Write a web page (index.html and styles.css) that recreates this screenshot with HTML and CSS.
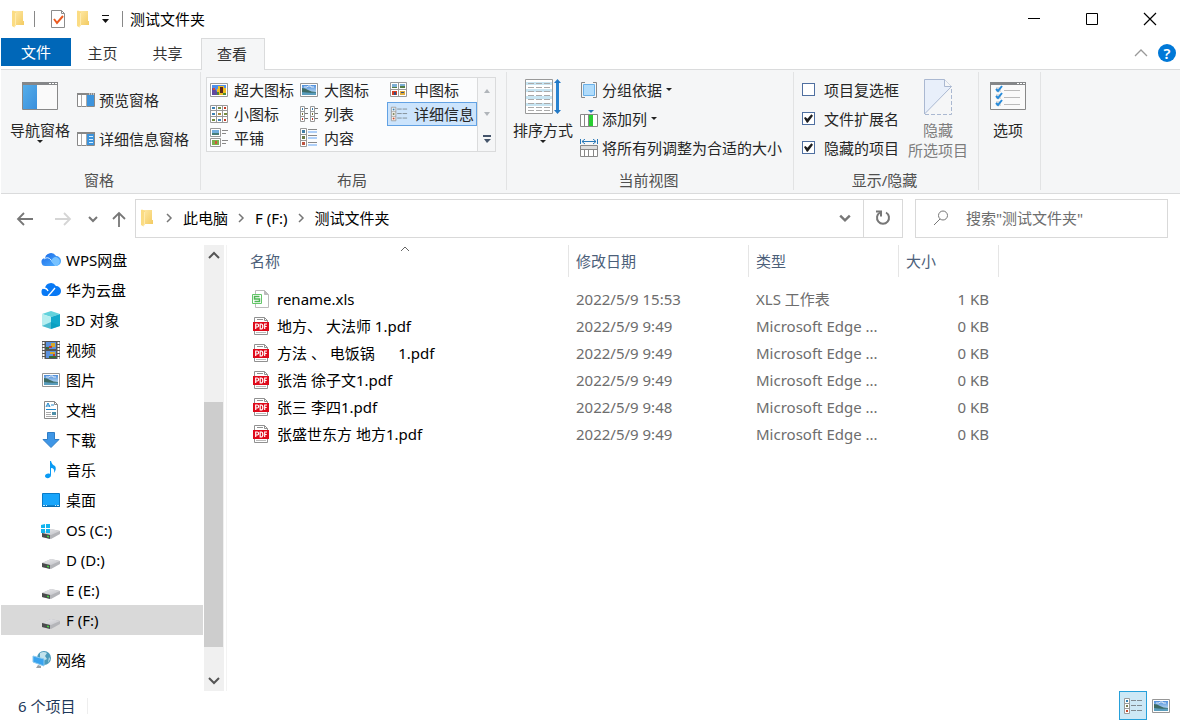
FILE: index.html
```html
<!DOCTYPE html>
<html lang="zh-CN">
<head>
    <meta charset="UTF-8">
    <meta name="viewport" content="width=device-width, initial-scale=1.0">
    <title>测试文件夹</title>
    <link rel="stylesheet" href="styles.css">
</head>
<body>

<!-- Shared icons -->
<svg class="sprite" aria-hidden="true">
    <linearGradient id="sky" x1="0" y1="0" x2="0" y2="1">
        <stop offset="0" stop-color="#4f8fdc"/>
        <stop offset="1" stop-color="#d5ecf7"/>
    </linearGradient>
    <linearGradient id="cloudFill" x1="0" y1="0" x2="1" y2="1">
        <stop offset="0" stop-color="#1668e8"/>
        <stop offset="1" stop-color="#55b4ff"/>
    </linearGradient>
    <linearGradient id="gold" x1="0" y1="0" x2="1" y2="1">
        <stop offset="0" stop-color="#ffe9a6"/>
        <stop offset="1" stop-color="#f3cb62"/>
    </linearGradient>
    <linearGradient id="blueFill" x1="0" y1="0" x2="1" y2="1">
        <stop offset="0" stop-color="#55aeea"/>
        <stop offset="1" stop-color="#3a8fdc"/>
    </linearGradient>
    <linearGradient id="driveTop" x1="0" y1="0" x2="1" y2="1">
        <stop offset="0" stop-color="#e9e9ec"/>
        <stop offset="1" stop-color="#c3c4c8"/>
    </linearGradient>
    <symbol id="folder" viewBox="0 0 14 18">
        <path d="M3 1h9v10h1v4H3z" fill="url(#gold)"/>
        <path d="M1 1l1-.5 3 1.500V15l-1.500 2.500L1 16z" fill="#fbdc83"/>
        <path d="M4.500 3v12l-1.500 2" stroke="#ffebae" fill="none"/>
    </symbol>
    <symbol id="photo" viewBox="0 0 18 14">
        <path d="M.5.5h17v13H.5z" fill="#fff" stroke="#969696"/>
        <path d="M2 2h14v10H2z" fill="url(#sky)"/>
        <path d="M2 5q3 0 6 2t8 2v1H2z" fill="#3d6b65"/>
        <path d="M2 9q6 1 14 .5V12H2z" fill="#5a9dbd"/>
        <path d="M4 4h3l1-1h3v1h3" stroke="#fff" fill="none" opacity=".8"/>
    </symbol>
    <symbol id="details" viewBox="0 0 20 20">
        <path d="M1.500 2.500h5v15h-5zM1.500 7.500h5M1.500 12.500h5" fill="#fff" stroke="#9b9b9b"/>
        <path d="M3 4h2v2H3z" fill="#367eb0"/>
        <path d="M3 9h2v2H3z" fill="#7a7f55"/>
        <path d="M3 14h2v2H3z" fill="#c64a2d"/>
        <path d="M8 4.500h5m1 0h5M8 9.500h5m1 0h5M8 14.500h5m1 0h5" stroke="#7f8a91"/>
    </symbol>
    <symbol id="drive" viewBox="0 0 20 20">
        <path d="M1 11l9-4 9 2v3l-9 5-9-2z" fill="#b4b5b9"/>
        <path d="M1 11l9-4 9 2-9 4z" fill="url(#driveTop)"/>
        <path d="M1 11l8 2v4l-8-2z" fill="#4a4b4d"/>
        <path d="M6 13.500l2 .5v1.500L6 15z" fill="#40d33d"/>
    </symbol>
    <symbol id="pdf" viewBox="0 0 18 20">
        <path d="M2.500 1.500h10l3 3v14h-13z" fill="#fff" stroke="#919191"/>
        <path d="M12.500 1.500v3h3M5 3.500h6" fill="none" stroke="#919191"/>
        <path d="M4 16.500h10" stroke="#bbb"/>
        <path d="M1 6h16v9H1z" fill="#df0a1b"/>
        <path d="M3.700 13V8h1.500q1.400 0 1.400 1.500T5.200 11H3.700M8.200 8v5h.9q1.700 0 1.700-2.500T9.100 8zM12.700 13V8H15m-2.300 2.500h2" fill="none" stroke="#fff" stroke-width="1.200"/>
    </symbol>
    <symbol id="chevronDown" viewBox="0 0 10 10">
        <path d="M1 3l4 4 4-4" fill="none" stroke="currentColor" stroke-width="2"/>
    </symbol>
    <symbol id="chevronRight" viewBox="0 0 10 10">
        <path d="M3 1l4 4-4 4" fill="none" stroke="#777" stroke-width="1.500"/>
    </symbol>
</svg>

<div class="window">

    <!-- Title bar -->
    <header class="titlebar">
        <svg class="folder-icon"><use href="#folder"/></svg>
        <span class="divider first"></span>
        <button class="plain" aria-label="属性">
            <svg width="16" height="20"><path d="M1.500 1.500h10l3 3v14h-13z" fill="#fff" stroke="#8c8c8c"/><path d="M11.500 1.500v3h3" fill="none" stroke="#8c8c8c"/><path d="M4 10l3 4 6-7" fill="none" stroke="#eb5a20" stroke-width="2"/></svg>
        </button>
        <button class="plain new-folder" aria-label="新建文件夹"><svg class="folder-icon"><use href="#folder"/></svg></button>
        <button class="plain" aria-label="自定义快速访问工具栏">
            <svg width="8" height="8"><path d="M0 0h7v1H0zM0 4h7L3.500 8z" fill="#111"/></svg>
        </button>
        <span class="divider last"></span>
        <h1>测试文件夹</h1>
        <div class="window-buttons">
            <button aria-label="最小化"><svg width="14" height="14"><path d="M1 6.500h12" stroke="#000"/></svg></button>
            <button aria-label="最大化"><svg width="14" height="14"><path d="M1.500 1.500h11v11h-11z" fill="none" stroke="#000"/></svg></button>
            <button aria-label="关闭"><svg width="14" height="14"><path d="M1 1l12 12M13 1L1 13" stroke="#000" stroke-width="1.200"/></svg></button>
        </div>
    </header>

    <!-- Ribbon tabs -->
    <nav class="tabs">
        <button class="tab file">文件</button>
        <button class="tab">主页</button>
        <button class="tab">共享</button>
        <button class="tab active">查看</button>
        <div class="tab-tools">
            <button class="plain" aria-label="最小化功能区"><svg width="14" height="8"><path d="M1 7l6-6 6 6" fill="none" stroke="#999" stroke-width="1.300"/></svg></button>
            <button class="help" aria-label="帮助">?</button>
        </div>
    </nav>

    <!-- Ribbon -->
    <section class="ribbon">
        <div class="group panes">
            <div class="group-body">
                <button class="big">
                    <svg width="36" height="34"><path d="M.5 3.500h35v27H.5z" fill="#fafafa" stroke="#888"/><path d="M0 3h36v3H0z" fill="#858789"/><path d="M27 4h2v1h-2zm3 0h2v1h-2zm3 0h2v1h-2z" fill="#fff"/><path d="M1 6h14v24H1z" fill="url(#blueFill)"/></svg>
                    <span>导航窗格</span>
                    <i class="caret"></i>
                </button>
                <div class="stack wide">
                    <button class="small"><svg width="18" height="14"><path d="M.5.5h17v13H.5z" fill="#fff" stroke="#888"/><path d="M0 0h18v2H0z" fill="#888"/><path d="M4.500 2v12M9.500 2v12" stroke="#aaa"/><path d="M10 2h7v11h-7z" fill="#3d94dd"/><path d="M12 1h1m1 0h1m1 0h1" stroke="#fff"/></svg>预览窗格</button>
                    <button class="small"><svg width="18" height="14"><path d="M.5.5h17v13H.5z" fill="#fff" stroke="#888"/><path d="M0 0h18v2H0z" fill="#888"/><path d="M4.500 2v12M9.500 2v12" stroke="#aaa"/><path d="M10 2h7v11h-7z" fill="#3d94dd"/><path d="M12 4.500h4m-4 3h4m-4 3h4" stroke="#d9f0ff"/></svg>详细信息窗格</button>
                </div>
            </div>
            <div class="group-label">窗格</div>
        </div>

        <div class="group layout">
            <div class="group-body">
                <div class="gallery">
                    <div class="gallery-items">
                        <button><svg width="18" height="20"><path d="M.5 3.500h17v13H.5z" fill="#fff" stroke="#999"/><path d="M2 5h14v10H2z" fill="#4d8eea"/><path d="M2 12h14v3H2z" fill="#4d8a35"/><path d="M2 8l3 1 2 3v3H2z" fill="#60499c"/><path d="M3 8h2v2H3z" fill="#e14b31"/><path d="M8 6h6v2h2v5h-3v2H9v-3H7V9h1z" fill="#f0bd20"/><path d="M10 7h3v6h-3z" fill="#59251b"/></svg>超大图标</button>
                        <button><svg width="18" height="20"><use href="#photo" y="3" width="18" height="14"/></svg>大图标</button>
                        <button><svg width="18" height="20"><path d="M.5 2.500h16v14H.500zM8.500 2v15M0 9.500h17" fill="#fff" stroke="#999"/><path d="M2 4h5v4H2zm8 0h5v4h-5z" fill="#7eafd5"/><path d="M2 7h5v1H2zm8-1h5v2h-5z" fill="#527d45"/><path d="M2 11h5v4H2z" fill="#d63d21"/><path d="M10 11h5v4h-5z" fill="#dfac3d"/><path d="M4 12h2v3H4zm7 0h3v1h-3z" fill="#354f83"/></svg>中图标</button>
                        <button><svg width="18" height="20"><path d="M.5 1.500h17v17H.500zM6.500 1v18M12.500 1v18M0 6.500h18M0 12.500h18" fill="#fff" stroke="#999"/><path d="M2 3h3v2H2zm0 6h3v2H2zm6 6h3v2H8z" fill="#3e83b5"/><path d="M8 3h3v2H8zm6 6h3v2h-3zM2 15h3v2H2z" fill="#748d3f"/><path d="M14 3h2v2h-2zm0 12h2v2h-2z" fill="#c13824"/><path d="M8 9h3v2H8z" fill="#a98a36"/></svg>小图标</button>
                        <button><svg width="18" height="20"><path d="M.5 2.500h4v15h-4zM.5 7.500h4m-4 5h4M10.500 2.500h4v15h-4zm0 5h4m-4 5h4" fill="#fff" stroke="#999"/><path d="M5 4.500h3m-3 5h3m-3 5h3m7-10h3m-3 5h3m-3 5h3" stroke="#777"/><path d="M2 4h1v2H2zm10 0h1v2h-1z" fill="#367eb0"/><path d="M2 9h1v2H2zm10 0h1v2h-1z" fill="#776f35"/><path d="M2 14h1v2H2zm10 0h1v2h-1z" fill="#c33523"/></svg>列表</button>
                        <button class="selected"><svg width="18" height="18"><use href="#details"/></svg>详细信息</button>
                        <button><svg width="18" height="20"><path d="M.5.500h10v8H.500zm0 10h10v8H.500z" fill="#fff" stroke="#999"/><path d="M2 2h7v5H2z" fill="#73addc"/><path d="M2 5h7v2H2z" fill="#457b77"/><path d="M2 12h7v5H2z" fill="#79b14d"/><path d="M5 13h2v3H5z" fill="#cf5737"/><path d="M12 2.500h6m-6 3h4m-4 7h6m-6 3h4" stroke="#888"/></svg>平铺</button>
                        <button><svg width="18" height="20"><path d="M.5.500h6v18h-6zm0 6h6m-6 6h6" fill="#fff" stroke="#999"/><path d="M2 2h3v3H2z" fill="#417da5"/><path d="M2 8h3v3H2z" fill="#6c7a45"/><path d="M2 14h3v3H2z" fill="#bd5440"/><path d="M8 1.500h9m-9 6h9m-9 7h9" stroke="#888"/><path d="M8 4h9m-9 6h9m-9 7h9" stroke="#62a3f4"/></svg>内容</button>
                    </div>
                    <div class="gallery-scroll">
                        <button aria-label="上一行"><svg width="8" height="5"><path d="M1 5l3-4 3 4z" fill="#b0b5ba"/></svg></button>
                        <button aria-label="下一行"><svg width="8" height="5"><path d="M1 0h6L4 4z" fill="#b0b5ba"/></svg></button>
                        <button aria-label="更多"><svg width="8" height="8"><path d="M0 0h8v2H0zM1 4h7L4 8z" fill="#44546a"/></svg></button>
                    </div>
                </div>
            </div>
            <div class="group-label">布局</div>
        </div>

        <div class="group current-view">
            <div class="group-body">
                <button class="big">
                    <svg width="36" height="36"><path d="M.5.500h27v34H.500z" fill="#fff" stroke="#999"/><path d="M1 3h26v3H1zm0 7h26v3H1zm0 7h26v3H1zm0 7h26v3H1z" fill="#c8e5f2"/><path d="M3 4.500h22m-22 4h22m-22 4h22m-22 4h22m-22 4h22m-22 4h22m-22 4h22m-22 3h22" stroke="#aaa" stroke-dasharray="6 2"/><path d="M32.500 2v31" stroke="#2782d0" stroke-width="3"/><path d="M29 4l3.500-4L36 4zm0 27l3.500 4 3.500-4z" fill="#2278c4"/></svg>
                    <span>排序方式</span>
                    <i class="caret"></i>
                </button>
                <div class="stack">
                    <button class="small"><svg width="18" height="18"><path d="M5 1.500H1.500v15H5m8-15h3.500v15H13" fill="none" stroke="#888"/><path d="M3.500 3.500h11v11h-11z" fill="#b1dcfb" stroke="#6ab1e9"/></svg>分组依据<i class="caret"></i></button>
                    <button class="small"><svg width="18" height="18"><path d="M.5 4.500h17v12H.500zm4 0v12M8.500 4v12m4-12v12" fill="#fff" stroke="#888"/><path d="M9 5h4v11H9z" fill="#28cf32"/><path d="M8 0h6l-3 3z" fill="#2878b8"/></svg>添加列<i class="caret"></i></button>
                    <button class="small"><svg width="18" height="18"><path d="M.500 0v5m17-5v5M2 2.500h14M5 0L2 2.500 5 5m8-5l3 2.500L13 5" fill="none" stroke="#2878b8"/><path d="M.500 6.500h17v11H.500zM4.500 11v6m4-6v6m5-6v6" fill="#fff" stroke="#888"/><path d="M1 7h16v4H1z" fill="#ddd"/><path d="M1 10.500h16" stroke="#888"/></svg>将所有列调整为合适的大小</button>
                </div>
            </div>
            <div class="group-label">当前视图</div>
        </div>

        <div class="group show-hide">
            <div class="group-body">
                <div class="checks">
                    <label><input type="checkbox">项目复选框</label>
                    <label><input type="checkbox" checked>文件扩展名</label>
                    <label><input type="checkbox" checked>隐藏的项目</label>
                </div>
                <button class="big" disabled>
                    <svg width="28" height="36"><path d="M.5 35V.500h20l7 7z" fill="#e8effa" stroke="#aab8d1"/><path d="M20.500.500v7h7" fill="#f5f6f7" stroke="#aab8d1"/><path d="M27.500 10v25.500H.500" fill="none" stroke="#aab8d1" stroke-dasharray="4 2"/></svg>
                    <span>隐藏</span>
                    <span>所选项目</span>
                </button>
            </div>
            <div class="group-label">显示/隐藏</div>
        </div>

        <div class="group options">
            <div class="group-body">
                <button class="big">
                    <svg width="36" height="34"><path d="M.5 3.500h35v27H.500z" fill="#fafafa" stroke="#888"/><path d="M0 3h36v3H0z" fill="#858789"/><path d="M27 4h2v1h-2zm3 0h2v1h-2zm3 0h2v1h-2z" fill="#fff"/><path d="M6 8h5v5H6zm0 7h5v5H6zm0 7h5v5H6z" fill="#ddd"/><path d="M6 10l2 2 4-5M6 17l2 2 4-5M6 24l2 2 4-5" fill="none" stroke="#278bda" stroke-width="2"/><path d="M14 11.500h16m-16 7h16m-16 7h16" stroke="#bbb"/></svg>
                    <span>选项</span>
                </button>
            </div>
        </div>
    </section>

    <!-- Navigation and address bar -->
    <div class="navbar">
        <div class="nav-buttons">
            <button class="plain" aria-label="后退"><svg width="18" height="16"><path d="M17 8H2m6-6L2 8l6 6" fill="none" stroke="#777" stroke-width="1.800"/></svg></button>
            <button class="plain forward" aria-label="前进"><svg width="18" height="16"><path d="M1 8h15m-6-6l6 6-6 6" fill="none" stroke="#d5d5d5" stroke-width="1.800"/></svg></button>
            <button class="plain recent" aria-label="最近浏览的位置"><svg width="10" height="10"><use href="#chevronDown"/></svg></button>
            <button class="plain" aria-label="向上"><svg width="14" height="18"><path d="M7 17V3M1 9l6-6 6 6" fill="none" stroke="#777" stroke-width="1.800"/></svg></button>
        </div>
        <div class="address">
            <svg class="folder-icon"><use href="#folder"/></svg>
            <svg class="crumb-arrow"><use href="#chevronRight"/></svg>
            <a href="#">此电脑</a>
            <svg class="crumb-arrow"><use href="#chevronRight"/></svg>
            <a href="#">F (F:)</a>
            <svg class="crumb-arrow"><use href="#chevronRight"/></svg>
            <a href="#">测试文件夹</a>
            <button class="plain history" aria-label="以前的位置"><svg width="12" height="12"><use href="#chevronDown"/></svg></button>
            <button class="refresh" aria-label="刷新"><svg width="16" height="16"><path d="M11 2.500a6 6 0 1 1-6 0" fill="none" stroke="#777" stroke-width="2"/><path d="M1 1.500h5v5" fill="none" stroke="#777" stroke-width="2"/></svg></button>
        </div>
        <label class="search">
            <svg width="18" height="18"><circle cx="11" cy="6.500" r="4.500" fill="none" stroke="#777"/><path d="M8 10l-6 6" stroke="#777"/></svg>
            <input type="text" aria-label="搜索" placeholder='搜索"测试文件夹"'>
        </label>
    </div>

    <main class="content">
        <!-- Folder tree -->
        <nav class="tree">
            <ul>
                <li><a href="#"><svg viewBox="0 0 20 20"><path d="M5 16a4 4 0 0 1-1-8 6 6 0 0 1 11-2 5 5 0 0 1 0 10z" fill="url(#cloudFill)"/><path d="M3 9q4-3 7 1l5 6" fill="none" stroke="#d7eeff"/><path d="M10 11q3-6 7-3 3 2 1 6-1 2-4 2z" fill="#77c2ff"/></svg>WPS网盘</a></li>
                <li><a href="#"><svg viewBox="0 0 20 20"><path d="M5 16a4 4 0 0 1-1-8 6 6 0 0 1 11-2 5 5 0 0 1 0 10z" fill="#0879f5"/><path d="M2 8q4 0 5 3M7 16q3-3 7-8" fill="none" stroke="#fff" stroke-width="1.300"/></svg>华为云盘</a></li>
                <li><a href="#"><svg viewBox="0 0 20 20"><path d="M1 4l9-3 9 3-9 3z" fill="#62d2dc"/><path d="M1 4l9 3v12l-9-3z" fill="#b5eef0"/><path d="M10 7l9-3v12l-9 3z" fill="#12a9cb"/><path d="M1 16l9-4 9 4-9 3z" fill="#079bbb" opacity=".6"/></svg>3D 对象</a></li>
                <li><a href="#"><svg viewBox="0 0 20 20"><path d="M1 1h18v18H1z" fill="#555"/><path d="M2.500 2v17m15-17v17" stroke="#fff" stroke-width="2" stroke-dasharray="2 1"/><path d="M5 2h10v7H5zm0 9h10v7H5z" fill="#5b91de"/><path d="M10 3h4v4h-4zm-1 9h5v2H9z" fill="#d4a92b"/><path d="M8 6h3v2H8zm4 8h2v2h-2z" fill="#c73f2b"/><path d="M5 7h3v2H5zm3 9h7v2H8z" fill="#386b37"/></svg>视频</a></li>
                <li><a href="#"><svg viewBox="0 0 20 20"><use href="#photo" x="1" y="3" width="18" height="14"/></svg>图片</a></li>
                <li><a href="#"><svg viewBox="0 0 20 20"><path d="M3.500 1.500h10l3 3v14h-13z" fill="#fff" stroke="#888"/><path d="M13.500 1.500v3h3" fill="none" stroke="#888"/><path d="M5 7l2-4 2 4M6 6h3m1-1h3M5 9.500h10m-4 3h4" fill="none" stroke="#2188cd"/><path d="M5 12.500h5m-5 2h5m-5 2h10" stroke="#aaa"/><path d="M11 12h4v3h-4z" fill="#4f8fa8"/></svg>文档</a></li>
                <li><a href="#"><svg viewBox="0 0 20 20"><path d="M6.500 2.500h7v7H18l-8 8-8-8h4.500z" fill="#3e96e6" stroke="#2f7dc6"/></svg>下载</a></li>
                <li><a href="#"><svg viewBox="0 0 20 20"><path d="M9 1h1q1 4 4 5 2 3-1 7 1-5-3-5v7c0 4-6 4-6 1 0-2 3-3 5-2z" fill="#0a9bf4"/></svg>音乐</a></li>
                <li><a href="#"><svg viewBox="0 0 20 20"><path d="M1.500 3.500h17v13h-17z" fill="#18a5fb" stroke="#087bc8"/><path d="M1 16h18" stroke="#075f9b"/><path d="M2 15.500h2m1 0h1m8 0h1m1 0h2" stroke="#c8edff"/></svg>桌面</a></li>
                <li><a href="#"><svg viewBox="0 0 20 20"><use href="#drive" y="2" width="20" height="20"/><path d="M0 5l4-1v4H0zm5-1h4v4H5zM0 9h4v4H0zm5 0h4v4H5z" fill="#14b5ef"/></svg>OS (C:)</a></li>
                <li><a href="#"><svg viewBox="0 0 20 20"><use href="#drive" y="2" width="20" height="20"/></svg>D (D:)</a></li>
                <li><a href="#"><svg viewBox="0 0 20 20"><use href="#drive" y="2" width="20" height="20"/></svg>E (E:)</a></li>
                <li><a href="#" class="current"><svg viewBox="0 0 20 20"><use href="#drive" y="2" width="20" height="20"/></svg>F (F:)</a></li>
                <li class="root"><a href="#"><svg viewBox="0 0 20 20"><circle cx="13" cy="8" r="7" fill="#4c9bbb"/><path d="M9 3q4-2 7 0l-2 3 2 3-4 2-3-3zM18 7l1 2-2 4z" fill="#c2e2ec"/><path d="M2 6l11 3v7L2 12z" fill="#39a3ef" stroke="#88c9f0"/><path d="M7 15l3 1v2H5z" fill="#9aa2a8"/></svg>网络</a></li>
            </ul>
            <div class="scrollbar">
                <button aria-label="向上滚动"><svg width="12" height="8"><path d="M1 7l5-5 5 5" fill="none" stroke="#555" stroke-width="2"/></svg></button>
                <div class="track-before"></div>
                <div class="thumb"></div>
                <div class="track-after"></div>
                <button aria-label="向下滚动"><svg width="12" height="8"><path d="M1 1l5 5 5-5" fill="none" stroke="#555" stroke-width="2"/></svg></button>
            </div>
        </nav>

        <!-- File list -->
        <section class="files">
            <table>
                <colgroup>
                    <col class="col-name">
                    <col class="col-date">
                    <col class="col-type">
                    <col class="col-size">
                </colgroup>
                <thead>
                    <tr>
                        <th>名称<svg class="sort-mark" width="10" height="6"><path d="M1 5l4-4 4 4" fill="none" stroke="#666"/></svg></th>
                        <th>修改日期</th>
                        <th>类型</th>
                        <th>大小</th>
                    </tr>
                </thead>
                <tbody>
                    <tr>
                        <td><span class="file-name"><svg><path d="M3.500 1.500h9l4 4v13h-13z" fill="#fff" stroke="#bbb"/><path d="M12.500 1.500v4h4" fill="#bbb" stroke="#bbb"/><path d="M.5 5.500h9v9h-9z" fill="#fff" stroke="#65c66a"/><path d="M7.500 7.500h-5v2.500h5v2.500h-5" fill="none" stroke="#4db653" stroke-width="1.500"/></svg>rename.xls</span></td>
                        <td>2022/5/9 15:53</td>
                        <td>XLS 工作表</td>
                        <td>1 KB</td>
                    </tr>
                    <tr>
                        <td><span class="file-name"><svg><use href="#pdf"/></svg>地方、 大法师 1.pdf</span></td>
                        <td>2022/5/9 9:49</td>
                        <td>Microsoft Edge ...</td>
                        <td>0 KB</td>
                    </tr>
                    <tr>
                        <td><span class="file-name"><svg><use href="#pdf"/></svg>方法 、 电饭锅      1.pdf</span></td>
                        <td>2022/5/9 9:49</td>
                        <td>Microsoft Edge ...</td>
                        <td>0 KB</td>
                    </tr>
                    <tr>
                        <td><span class="file-name"><svg><use href="#pdf"/></svg>张浩 徐子文1.pdf</span></td>
                        <td>2022/5/9 9:49</td>
                        <td>Microsoft Edge ...</td>
                        <td>0 KB</td>
                    </tr>
                    <tr>
                        <td><span class="file-name"><svg><use href="#pdf"/></svg>张三 李四1.pdf</span></td>
                        <td>2022/5/9 9:48</td>
                        <td>Microsoft Edge ...</td>
                        <td>0 KB</td>
                    </tr>
                    <tr>
                        <td><span class="file-name"><svg><use href="#pdf"/></svg>张盛世东方 地方1.pdf</span></td>
                        <td>2022/5/9 9:49</td>
                        <td>Microsoft Edge ...</td>
                        <td>0 KB</td>
                    </tr>
                </tbody>
            </table>
        </section>
    </main>

    <!-- Status bar -->
    <footer class="statusbar">
        <span class="count">6 个项目</span>
        <div class="view-buttons">
            <button class="on" aria-label="详细信息视图"><svg width="20" height="20"><use href="#details"/></svg></button>
            <button aria-label="大缩略图视图"><svg width="18" height="14"><use href="#photo"/></svg></button>
        </div>
    </footer>
</div>

</body>
</html>
```
FILE: styles.css
```css
* {
    box-sizing: border-box;
}

body {
    margin: 0;
    background: #fff;
    color: #000;
    font-family: "Noto Sans", "Noto Sans CJK SC", sans-serif;
    font-size: 15px;
    line-height: 20px;
}

button,
input {
    font: inherit;
    color: inherit;
    padding: 0;
    margin: 0;
    border: none;
    background: none;
}

a {
    color: inherit;
    text-decoration: none;
}

svg {
    display: block;
    flex: none;
}

.sprite {
    position: absolute;
    width: 0;
    height: 0;
}

.window {
    display: flex;
    flex-direction: column;
    min-height: 100vh;
    padding: 0 1px;
}

.plain {
    display: flex;
    align-items: center;
    justify-content: center;
}

.folder-icon {
    width: 14px;
    height: 18px;
}

.caret {
    border: 3px solid transparent;
    border-top-color: #222;
    border-bottom: none;
}

/* Title bar */
.titlebar {
    display: flex;
    align-items: center;
    height: 38px;
    padding-left: 10px;
}

.titlebar h1 {
    margin: 0;
    font-size: 15px;
    font-weight: 400;
}

.divider {
    width: 1px;
    height: 16px;
    background: #888;
}

.divider.first {
    margin: 0 15px 0 9px;
}

.divider.last {
    margin: 0 7px 0 12px;
}

.new-folder {
    margin: 0 12px 0 10px;
}

.window-buttons {
    display: flex;
    margin-left: auto;
    padding-right: 1px;
}

.window-buttons button {
    display: flex;
    align-items: center;
    justify-content: center;
    width: 58px;
    height: 38px;
}

/* Ribbon tabs */
.tabs {
    display: flex;
    height: 32px;
    border-bottom: 1px solid #dadbdc;
}

.tab {
    width: 65px;
    height: 31px;
    padding: 0 2px 2px 0;
    color: #333;
}

.tab.file {
    width: 70px;
    height: 28px;
    padding: 0;
    background: #0067b8;
    color: #fff;
}

.tab.active {
    width: 64px;
    height: 32px;
    border: 1px solid #dadbdc;
    border-bottom: none;
    background: #f5f6f7;
}

.tab-tools {
    display: flex;
    align-items: center;
    gap: 10px;
    margin-left: auto;
    padding: 0 4px 2px 0;
}

.help {
    width: 18px;
    height: 18px;
    border-radius: 50%;
    background: #0078d7;
    color: #fff;
    font-weight: 600;
    line-height: 18px;
}

/* Ribbon */
.ribbon {
    display: flex;
    height: 124px;
    padding: 2px 0 3px;
    border-bottom: 1px solid #dadbdc;
    background: #f5f6f7;
    color: #262626;
}

.group {
    display: flex;
    flex-direction: column;
    border-right: 1px solid #e2e3e4;
    white-space: nowrap;
}

.group-body {
    display: flex;
    flex: 1;
    padding: 3px 0 0 5px;
}

.group-label {
    padding-right: 3px;
    color: #505050;
    text-align: center;
}

.panes {
    width: 200px;
}

.panes .group-body {
    gap: 7px;
    padding-left: 9px;
}

.layout {
    width: 306px;
}

.current-view {
    width: 287px;
}

.current-view .group-body {
    gap: 7px;
    padding-left: 6px;
}

.show-hide {
    width: 185px;
}

.show-hide .group-body {
    gap: 9px;
    padding-left: 8px;
}

.options {
    width: 62px;
}

.big {
    display: flex;
    flex-direction: column;
    align-items: center;
    justify-content: flex-start;
    min-width: 60px;
    padding-top: 4px;
}

.big svg {
    height: 41px;
}

.big:disabled {
    color: #7d7d7d;
}

.options .big {
    min-width: 48px;
}

.stack {
    display: flex;
    flex-direction: column;
}

.small {
    display: flex;
    align-items: center;
    gap: 4px;
    height: 29px;
}

.wide {
    padding-top: 5px;
}

.wide .small {
    height: 39px;
}

.checks label {
    display: flex;
    align-items: center;
    gap: 9px;
    height: 29px;
}

.checks input {
    display: grid;
    place-items: center;
    appearance: none;
    width: 13px;
    height: 13px;
    border: 1px solid #4f6fa0;
    background: #fff;
}

.checks input:checked::after {
    content: "";
    width: 9px;
    height: 9px;
    background: #1e1e1e;
    clip-path: polygon(0 45%, 16% 32%, 38% 54%, 82% 4%, 100% 20%, 42% 96%, 32% 96%);
}

/* Layout gallery */
.gallery {
    display: flex;
    height: 75px;
    margin-top: 2px;
    border: 1px solid #dadbdc;
    background: #fbfcfd;
}

.gallery-items {
    display: grid;
    grid-template-columns: repeat(3, 90px);
    grid-template-rows: repeat(3, 24px);
}

.gallery-items button {
    display: flex;
    align-items: center;
    gap: 6px;
    padding-left: 3px;
}

.gallery-items .selected {
    padding-left: 2px;
    border: 1px solid #62a2e4;
    background: #cce4fc;
}

.gallery-scroll {
    display: flex;
    flex-direction: column;
    width: 18px;
    border-left: 1px solid #dadbdc;
    background: #f5f6f7;
}

.gallery-scroll button {
    display: flex;
    flex: 1;
    align-items: center;
    justify-content: center;
}

/* Address row */
.navbar {
    display: flex;
    height: 51px;
    padding: 5px 12px 7px 0;
}

.nav-buttons {
    display: flex;
    align-items: center;
    width: 134px;
    padding-left: 15px;
    color: #777;
}

.forward {
    margin-left: 20px;
}

.recent {
    margin: 0 14px 0 16px;
}

.address {
    display: flex;
    flex: 1;
    align-items: center;
    padding: 0 0 1px 4px;
    border: 1px solid #d9d9d9;
}

.crumb-arrow {
    width: 10px;
    height: 10px;
    margin: 0 9px 0 8px;
}

.address .folder-icon {
    margin-right: 2px;
}

.history {
    width: 36px;
    height: 36px;
    margin-left: auto;
    color: #777;
}

.refresh {
    display: flex;
    align-items: center;
    justify-content: center;
    width: 39px;
    height: 37px;
    border-left: 1px solid #d9d9d9;
}

.search {
    display: flex;
    align-items: center;
    gap: 16px;
    width: 253px;
    margin-left: 12px;
    padding: 0 0 1px 16px;
    border: 1px solid #d9d9d9;
}

.search input {
    flex: 1;
    min-width: 0;
    outline: none;
}

.search input::placeholder {
    color: #6d6d6d;
    opacity: 1;
}

/* Folder tree */
.content {
    display: flex;
    flex: 1;
}

.tree {
    display: flex;
    width: 226px;
    border-right: 1px solid #f3f3f3;
}

.tree ul {
    flex: 1;
    margin: 0;
    padding: 0;
    list-style: none;
}

.tree a {
    display: flex;
    align-items: center;
    gap: 5px;
    height: 30px;
    padding-left: 40px;
}

.tree a svg {
    width: 20px;
    height: 20px;
}

.tree .current {
    background: #d9d9d9;
}

.tree .root {
    margin-top: 10px;
}

.tree .root a {
    padding-left: 30px;
}

.scrollbar {
    display: flex;
    flex-direction: column;
    width: 20px;
    margin: 0 2px 0 1px;
    background: #f0f0f0;
}

.scrollbar button {
    display: flex;
    align-items: center;
    justify-content: center;
    height: 20px;
}

.track-before {
    flex: 137;
}

.thumb {
    flex: 245;
    margin-right: 1px;
    background: #cdcdcd;
}

.track-after {
    flex: 24;
}

/* File list */
.files {
    flex: 1;
    padding-left: 15px;
}

.files table {
    table-layout: fixed;
    width: 757px;
    border-collapse: separate;
    border-spacing: 0;
    color: #6d6d6d;
}

.col-name {
    width: 327px;
}

.col-date {
    width: 180px;
}

.col-type {
    width: 150px;
}

.col-size {
    width: 100px;
}

.files th {
    position: relative;
    height: 32px;
    padding: 0 7px;
    border-right: 1px solid #e5e5e5;
    color: #4c607a;
    font-weight: 400;
    text-align: left;
}

.files th:first-child {
    padding-left: 8px;
}

.sort-mark {
    position: absolute;
    top: 1px;
    left: 50%;
    margin-left: -5px;
}

.files tbody::before {
    content: "";
    display: block;
    height: 8px;
}

.files td {
    height: 27px;
    padding: 0 7px;
    white-space: nowrap;
}

.files td:first-child {
    padding-left: 10px;
    color: #000;
}

.files td:last-child {
    padding-right: 10px;
    text-align: right;
}

.file-name {
    display: flex;
    align-items: center;
    gap: 7px;
    white-space: pre;
}

.file-name svg {
    width: 18px;
    height: 20px;
}

/* Status bar */
.statusbar {
    display: flex;
    align-items: center;
    justify-content: space-between;
    height: 30px;
    padding: 0 10px 1px 17px;
    color: #1e395b;
}

.count {
    padding-right: 12px;
    border-right: 1px solid #eee;
    line-height: 16px;
}

.view-buttons {
    display: flex;
    align-items: center;
    gap: 5px;
}

.view-buttons .on {
    display: flex;
    align-items: center;
    justify-content: center;
    width: 28px;
    height: 29px;
    border: 1px solid #26a0da;
    background: #cce8f6;
}
```
